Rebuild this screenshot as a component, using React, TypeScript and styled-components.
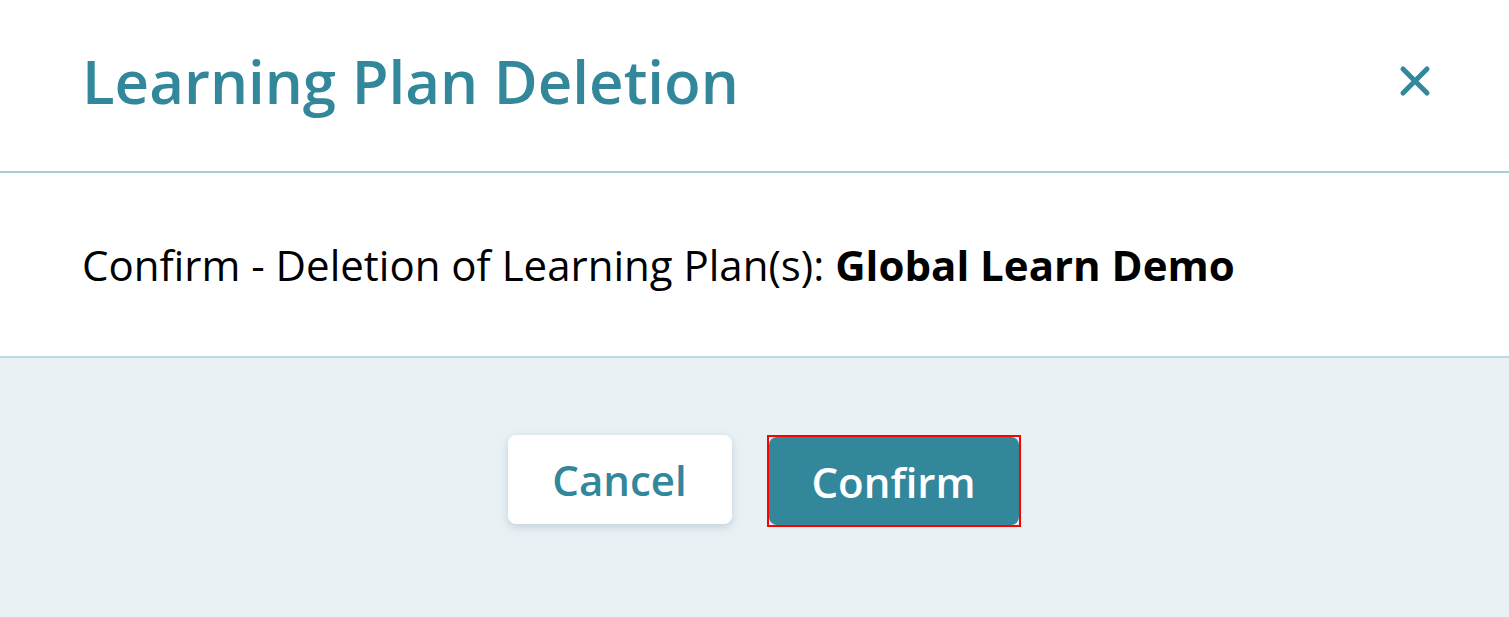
import React from "react";
import styled, { createGlobalStyle } from "styled-components";

const Global = createGlobalStyle`
  html, body { margin: 0; padding: 0; background: #ffffff; }
  body { font-family: "Open Sans", "Noto Sans", sans-serif; }
  * { box-sizing: border-box; }
`;

const Dialog = styled.div`
  width: 1509px;
  height: 617px;
  display: flex;
  flex-direction: column;
  background: #ffffff;
`;

const Header = styled.header`
  height: 173px;
  display: flex;
  align-items: center;
  justify-content: space-between;
  padding: 0 76px 10px 82px;
  border-bottom: 2px solid #a6cdd6;
`;

const Title = styled.h1`
  margin: 0;
  font-size: 60px;
  font-weight: 600;
  color: #32879b;
  letter-spacing: 0;
`;

const CloseButton = styled.button`
  width: 36px;
  height: 36px;
  padding: 0;
  border: none;
  background: transparent;
  display: flex;
  align-items: center;
  justify-content: center;
  cursor: pointer;
`;

const Body = styled.section`
  height: 185px;
  display: flex;
  align-items: center;
  padding: 0 82px;
  border-bottom: 2px solid #bfd8e1;
`;

const Message = styled.p`
  margin: 0;
  font-size: 42px;
  color: #000000;
  strong { font-weight: 700; }
`;

const Footer = styled.footer`
  flex: 1;
  background: #e9f1f5;
  display: flex;
  justify-content: center;
  align-items: flex-start;
  gap: 37px;
  padding: 77px 0 0 17px;
`;

const Button = styled.button<{ $primary?: boolean }>`
  position: relative;
  height: ${(p) => (p.$primary ? "88px" : "89px")};
  padding: 0;
  width: ${(p) => (p.$primary ? "250px" : "224px")};
  border-radius: 8px;
  border: none;
  font-family: "Open Sans", "Noto Sans", sans-serif;
  font-size: 42px;
  font-weight: 600;
  cursor: pointer;
  outline: none;
  background: ${(p) => (p.$primary ? "#32879b" : "#ffffff")};
  color: ${(p) => (p.$primary ? "#ffffff" : "#32879b")};
  box-shadow: ${(p) => (p.$primary ? "none" : "0 3px 8px rgba(120, 150, 165, 0.35)")};
  margin-top: ${(p) => (p.$primary ? "2px" : "0")};
`;

const FocusRing = styled.span`
  position: absolute;
  inset: -2px;
  border: 2px solid #ff0000;
  pointer-events: none;
`;

export default function App() {
  return (
    <>
      <Global />
      <Dialog>
        <Header>
          <Title>Learning Plan Deletion</Title>
          <CloseButton aria-label="Close">
            <svg width="34" height="34" viewBox="0 0 34 34">
              <path d="M5 5 L29 29 M29 5 L5 29" stroke="#32879b" strokeWidth="5" strokeLinecap="round" fill="none" />
            </svg>
          </CloseButton>
        </Header>
        <Body>
          <Message>
            Confirm - Deletion of Learning Plan(s): <strong>Global Learn Demo</strong>
          </Message>
        </Body>
        <Footer>
          <Button>Cancel</Button>
          <Button $primary>
            Confirm
            <FocusRing />
          </Button>
        </Footer>
      </Dialog>
    </>
  );
}
